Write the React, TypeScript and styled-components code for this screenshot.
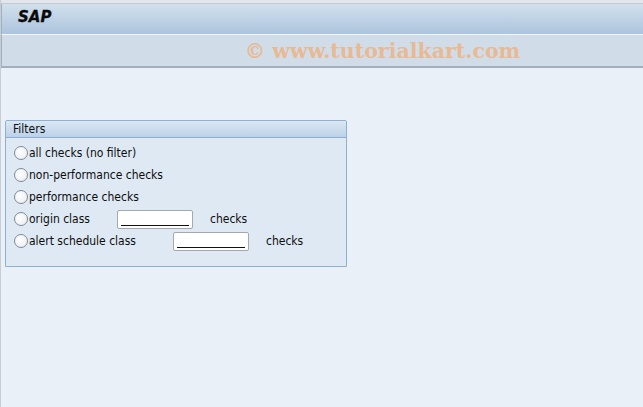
import React from "react";
import styled, { createGlobalStyle } from "styled-components";

const Global = createGlobalStyle`
  html, body { margin: 0; padding: 0; }
  body { background: #e9f0f8; font-family: Tahoma, "DejaVu Sans", sans-serif; }
`;

const Frame = styled.div`
  width: 643px;
  height: 407px;
  box-sizing: border-box;
  border-left: 1px solid #c9cdd2;
  background: #e9f0f8;
  display: flex;
  flex-direction: column;
`;

const TopStrip = styled.div`
  height: 3px;
  background: #e3e7ec;
  border-bottom: 1px solid #c3cad3;
`;

const TitleBar = styled.div`
  height: 30px;
  background: linear-gradient(#d2e0ed, #acc4dd);
  border-bottom: 1px solid #f2f6fa;
  display: flex;
  align-items: center;
  padding-left: 16px;
  border-left: 1px solid #9eb0c3;
`;

const Title = styled.span`
  font-family: "DejaVu Sans", sans-serif;
  font-weight: bold;
  font-style: italic;
  font-size: 15px;
  color: #0a0a0a;
  margin-top: -4px;
  -webkit-text-stroke: 0.3px #0a0a0a;
`;

const ToolBar = styled.div`
  height: 31px;
  background: #d0dde8;
  border-bottom: 2px solid #a3aebb;
  border-left: 1px solid #9eb0c3;
  display: flex;
  align-items: center;
  justify-content: center;
  padding-left: 120px;
`;

const Watermark = styled.span`
  font-family: "DejaVu Serif", serif;
  font-weight: bold;
  font-size: 20.5px;
  color: #e9b993;
  margin-top: 1px;
`;

const Content = styled.div`
  padding: 52px 0 0 4px;
`;

const Group = styled.div`
  width: 342px;
  height: 147px;
  box-sizing: border-box;
  border: 1px solid #8eb0d2;
  border-radius: 2px 2px 0 0;
  background: #dfe9f4;
  display: flex;
  flex-direction: column;
`;

const GroupHeader = styled.div`
  height: 16px;
  background: linear-gradient(#dbe7f3, #bcd2e8);
  border-bottom: 1px solid #8eb0d2;
  font-family: "DejaVu Sans Condensed", "DejaVu Sans", sans-serif;
  font-size: 12px;
  color: #111;
  padding-left: 7px;
  line-height: 16px;
`;

const Rows = styled.div`
  display: flex;
  flex-direction: column;
  padding: 4px 0 0 8px;
`;

const Row = styled.div`
  height: 22px;
  display: flex;
  align-items: center;
  font-family: "DejaVu Sans Condensed", "DejaVu Sans", sans-serif;
  font-size: 12px;
  color: #0d0d0d;
`;

const Radio = styled.span`
  width: 12px;
  height: 12px;
  border-radius: 50%;
  border: 1px solid #7f8a96;
  background: radial-gradient(circle at 40% 40%, #ffffff, #e6e9ee);
  margin-right: 1px;
  flex: none;
`;

const Label = styled.span<{ $w?: number }>`
  ${(p) => (p.$w ? `width: ${p.$w}px;` : "")}
`;

const Field = styled.span`
  width: 76px;
  height: 19px;
  box-sizing: border-box;
  border: 1px solid #a5a9ae;
  border-radius: 2px;
  background: #fff;
  display: flex;
  align-items: flex-end;
  padding: 0 3px 2px 3px;
  margin-right: 17px;
  &::after {
    content: "";
    flex: 1;
    height: 1px;
    background: #111;
  }
`;

export default function App() {
  return (
    <>
      <Global />
      <Frame>
        <TopStrip />
        <TitleBar>
          <Title>SAP</Title>
        </TitleBar>
        <ToolBar>
          <Watermark>© www.tutorialkart.com</Watermark>
        </ToolBar>
        <Content>
          <Group>
            <GroupHeader>Filters</GroupHeader>
            <Rows>
              <Row>
                <Radio />
                <Label>all checks (no filter)</Label>
              </Row>
              <Row>
                <Radio />
                <Label>non-performance checks</Label>
              </Row>
              <Row>
                <Radio />
                <Label>performance checks</Label>
              </Row>
              <Row>
                <Radio />
                <Label $w={88}>origin class</Label>
                <Field />
                <Label>checks</Label>
              </Row>
              <Row>
                <Radio />
                <Label $w={144}>alert schedule class</Label>
                <Field />
                <Label>checks</Label>
              </Row>
            </Rows>
          </Group>
        </Content>
      </Frame>
    </>
  );
}
